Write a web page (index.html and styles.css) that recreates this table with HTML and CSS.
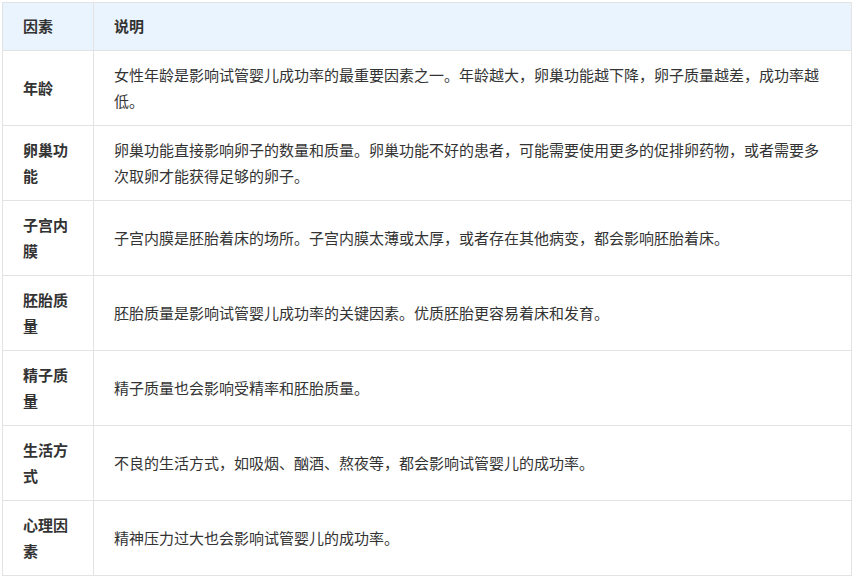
FILE: index.html
```html
<!DOCTYPE html>
<html lang="zh-CN">
<head>
<meta charset="utf-8">
<link rel="stylesheet" href="styles.css">
</head>
<body>
<table class="factors">
  <thead>
    <tr><th class="c-name">因素</th><th class="c-desc">说明</th></tr>
  </thead>
  <tbody>
    <tr><td class="c-name">年龄</td><td class="c-desc">女性年龄是影响试管婴儿成功率的最重要因素之一。年龄越大，卵巢功能越下降，卵子质量越差，成功率越低。</td></tr>
    <tr><td class="c-name">卵巢功能</td><td class="c-desc">卵巢功能直接影响卵子的数量和质量。卵巢功能不好的患者，可能需要使用更多的促排卵药物，或者需要多次取卵才能获得足够的卵子。</td></tr>
    <tr><td class="c-name">子宫内膜</td><td class="c-desc">子宫内膜是胚胎着床的场所。子宫内膜太薄或太厚，或者存在其他病变，都会影响胚胎着床。</td></tr>
    <tr><td class="c-name">胚胎质量</td><td class="c-desc">胚胎质量是影响试管婴儿成功率的关键因素。优质胚胎更容易着床和发育。</td></tr>
    <tr><td class="c-name">精子质量</td><td class="c-desc">精子质量也会影响受精率和胚胎质量。</td></tr>
    <tr><td class="c-name">生活方式</td><td class="c-desc">不良的生活方式，如吸烟、酗酒、熬夜等，都会影响试管婴儿的成功率。</td></tr>
    <tr><td class="c-name">心理因素</td><td class="c-desc">精神压力过大也会影响试管婴儿的成功率。</td></tr>
  </tbody>
</table>
</body>
</html>
```
FILE: styles.css
```css
html, body {
  margin: 0;
  padding: 0;
  background: #ffffff;
}
body {
  padding: 2px 0 0 2px;
  font-family: "Microsoft YaHei", "Noto Sans CJK SC", "Noto Sans", sans-serif;
  color: #333333;
}
.factors {
  width: 850px;
  border-collapse: collapse;
  font-size: 15px;
  line-height: 26px;
}
.factors th,
.factors td {
  border: 1px solid #e3e3e3;
  text-align: left;
  vertical-align: middle;
}
.factors th {
  background: #eaf4fe;
  font-weight: bold;
  padding: 10px 20px 11px 20px;
  color: #333333;
}
.factors td {
  padding: 11px 20px;
  height: 52px;
}
.factors td.c-name {
  font-weight: bold;
}
.c-name {
  width: 50px;
}
```
